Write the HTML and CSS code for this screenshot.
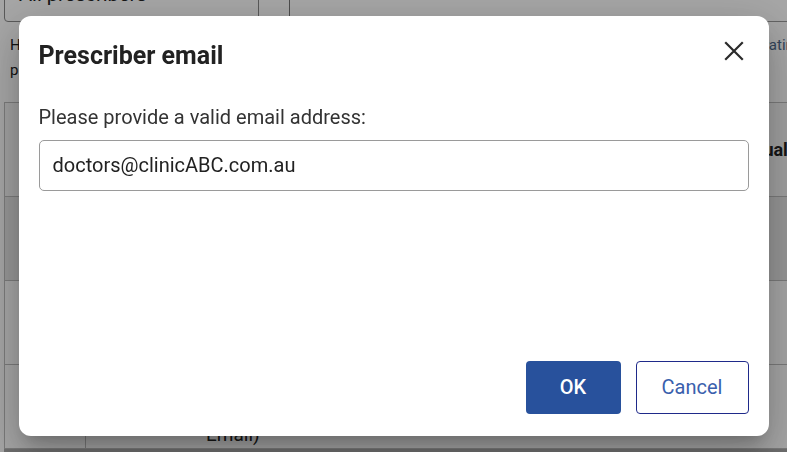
FILE: index.html
```html
<!DOCTYPE html>
<html lang="en">
<head>
<meta charset="utf-8">
<title>Prescriber email</title>
<link rel="stylesheet" href="styles.css">
</head>
<body>
<div class="page">
  <div class="filters">
    <div class="select">All prescribers</div>
    <div class="spacer"></div>
    <div class="search">Search here</div>
  </div>
  <div class="help">
    <p class="help-line">Here you can review every prescriber linked to your pharmacy and update their contact details, reporting and their <span class="link">rating</span></p>
    <p class="help-line">prescribers without an email address cannot receive reports.</p>
  </div>
  <div class="table">
    <div class="row head">
      <div class="cell c1"></div>
      <div class="cell c2"></div>
      <div class="cell c3"><b>Qualification</b></div>
    </div>
    <div class="row shade">
      <div class="cell c1"></div>
      <div class="cell c2"></div>
      <div class="cell c3"></div>
    </div>
    <div class="row">
      <div class="cell c1"></div>
      <div class="cell c2"></div>
      <div class="cell c3"></div>
    </div>
    <div class="row">
      <div class="cell c1"></div>
      <div class="cell c2"><span class="email-note">Email)</span></div>
      <div class="cell c3"></div>
    </div>
  </div>
  <div class="scrollbar"></div>
</div>

<div class="overlay">
  <div class="dialog" role="dialog" aria-labelledby="dlg-title">
    <div class="dialog-head">
      <h2 id="dlg-title" class="dialog-title">Prescriber email</h2>
      <button class="close" aria-label="Close">
        <svg width="20" height="20" viewBox="0 0 20 20"><path d="M2 2 L18 18 M18 2 L2 18" stroke="#2b2b2b" stroke-width="2.2" stroke-linecap="square" fill="none"/></svg>
      </button>
    </div>
    <label class="field-label" for="email">Please provide a valid email address:</label>
    <input id="email" class="field" type="text" value="doctors@clinicABC.com.au">
    <div class="dialog-actions">
      <button class="btn btn-primary">OK</button>
      <button class="btn btn-outline">Cancel</button>
    </div>
  </div>
</div>
</body>
</html>
```

FILE: styles.css
```css
* { box-sizing: border-box; }
html, body { margin: 0; padding: 0; }
body {
  width: 787px;
  height: 452px;
  overflow: hidden;
  background: #ffffff;
  font-family: Roboto, "Liberation Sans", sans-serif;
  color: #222;
}

.page {
  margin-top: -22px;
  padding: 0 0 0 4px;
  height: 474px;
  width: 787px;
  overflow: hidden;
  display: flex;
  flex-direction: column;
}

.filters {
  display: flex;
  height: 44px;
  flex: none;
}
.select {
  width: 255px;
  border: 1px solid #8a8a8a;
  border-radius: 4px;
  padding: 3px 14px;
  font-size: 20px;
  color: #222;
}
.spacer {
  width: 31px;
  border-right: 1px solid #777;
  height: 44px;
}
.search {
  flex: 1;
  border-bottom: 1px solid #999;
  padding: 3px 13px;
  font-size: 20px;
  color: #888;
}

.help {
  padding: 11px 0 0 6px;
  height: 80px;
  flex: none;
  font-size: 15px;
  color: #1a1a1a;
  overflow: hidden;
}
.help-line {
  margin: 0;
  line-height: 25px;
  white-space: nowrap;
}
.link { color: #4f6a8c; }

.table {
  border-left: 1px solid #bdbdbd;
  border-top: 1px solid #bdbdbd;
  flex: none;
}
.row {
  display: flex;
  height: 84px;
  border-bottom: 1px solid #bdbdbd;
}
.row.head { height: 94px; background: #f7f7f7; }
.row.shade { background: #e8e8e8; }
.cell { padding: 0 12px; display: flex; align-items: center; }
.c1 { width: 81px; border-right: 1px solid #bdbdbd; }
.c2 { width: 666px; justify-content: flex-start; }
.c3 { flex: 1; font-size: 18px; white-space: nowrap; padding-left: 0; overflow: hidden; }
.c3 b { margin-left: -1px; }
.email-note {
  font-size: 19px;
  margin: 56px 0 0 108px;
  color: #222;
}
.scrollbar {
  height: 20px;
  background: #aaaaaa;
}

.overlay {
  position: fixed;
  inset: 0;
  background: rgba(0, 0, 0, 0.35);
  display: flex;
  align-items: center;
  justify-content: center;
}

.dialog {
  width: 750px;
  height: 420px;
  margin-top: -1px;
  background: #fff;
  border-radius: 12px;
  padding: 24px 20px 22px 20px;
  display: flex;
  flex-direction: column;
  box-shadow: 0 11px 15px -7px rgba(0,0,0,.2), 0 24px 38px 3px rgba(0,0,0,.14), 0 9px 46px 8px rgba(0,0,0,.12);
}

.dialog-head {
  display: flex;
  align-items: center;
  justify-content: space-between;
  height: 32px;
}
.dialog-title {
  margin: 0;
  font-size: 25px;
  font-weight: 700;
  color: #222;
}
.close {
  border: 0;
  background: none;
  padding: 0;
  width: 20px;
  height: 20px;
  margin-right: 5px;
  margin-top: -10px;
  display: flex;
}

.field-label {
  margin-top: 33px;
  font-size: 20px;
  line-height: 24px;
  color: #333;
}
.field {
  margin-top: 11px;
  height: 51px;
  border: 1px solid #9a9a9a;
  border-radius: 5px;
  padding: 0 13px;
  font-family: Roboto, "Liberation Sans", sans-serif;
  font-size: 20px;
  color: #222;
  outline: none;
}

.dialog-actions {
  margin-top: auto;
  display: flex;
  justify-content: flex-end;
  gap: 15px;
}
.btn {
  height: 53px;
  border-radius: 4px;
  font-family: Roboto, "Liberation Sans", sans-serif;
  font-size: 20px;
  cursor: pointer;
}
.btn-primary {
  width: 95px;
  background: #28519c;
  border: 0;
  color: #fff;
  font-weight: 500;
}
.btn-outline {
  width: 113px;
  background: #fff;
  border: 1px solid #1f2a8a;
  color: #3a60ad;
}
```
